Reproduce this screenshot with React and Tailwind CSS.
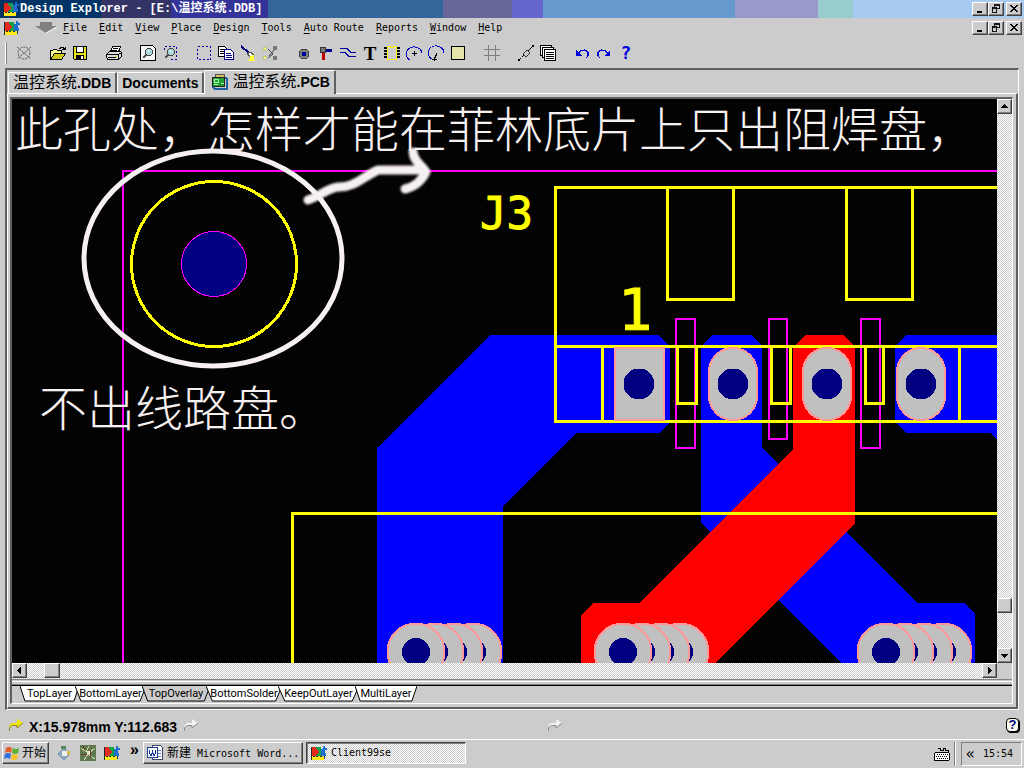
import React from "react";

const raised =
  "border border-t-white border-l-white border-r-[#404040] border-b-[#404040] bg-[#ccc] shadow-[inset_-1px_-1px_0_#808080]";
const dither =
  "bg-[conic-gradient(#fff_25%,#ccc_0_50%,#fff_0_75%,#ccc_0)] bg-[length:2px_2px]";

function Icon({ children, size = 16 }) {
  return (
    <svg
      width={size}
      height={size}
      viewBox="0 0 16 16"
      fill="none"
      stroke="#000"
      shapeRendering="crispEdges"
      className="shrink-0"
      aria-hidden="true"
    >
      {children}
    </svg>
  );
}

function LogoIcon() {
  return (
    <Icon>
      <path d="M0 2h10v13H0z" fill="#202830" stroke="none" />
      <path d="M10 4h4v10h-4z" fill="#123a70" stroke="none" />
      <path d="M1 2h4v9H1z" fill="#e8281c" stroke="none" />
      <path d="M5 2h5v9H5z" fill="#13a04a" stroke="none" />
      <path d="M5 4l4 3-4 3z" fill="#e8281c" stroke="none" />
      <path d="M10 4h2V1h2v2h2v2h-2v3h1v3h-5z" fill="#1c6fd0" stroke="none" />
      <path d="M1 11h1v1h2v-1h1v1h2v-1h2v1h2v-1h2v4H1z" fill="#ffe81c" stroke="none" />
    </Icon>
  );
}

const caption = [
  ["Minimize", <path key="m" d="M4 11h6" strokeWidth="2" />],
  ["Restore", <path key="r" d="M6 3.500h6M6.500 3v3M11.500 3v5M12 7.500H9M3 6.500h6M3 7.500h6M3.500 6v6M8.500 6v6M3 11.500h6M6 2.500h6" />],
  ["Close", <path key="c" d="M4 3l8 8M12 3l-8 8" strokeWidth="1.600" />],
];

function CaptionButtons({ of }) {
  return (
    <div className="ml-auto mr-0.5 flex">
      {caption.map(([name, art]) => (
        <button
          key={name}
          aria-label={`${name} ${of}`}
          className={`flex h-[14px] w-4 items-center justify-center last:ml-0.5 ${raised}`}
        >
          <Icon size={14}>{art}</Icon>
        </button>
      ))}
    </div>
  );
}

const menus = ["File", "Edit", "View", "Place", "Design", "Tools", "Auto Route", "Reports", "Window", "Help"];

const lens = (
  <>
    <circle cx="9" cy="7" r="3.500" fill="#a8d8d8" stroke="#444" />
    <path d="M6 10l-3 3" stroke="#555" strokeWidth="2" />
    <path d="M8 5h1v2H8z" fill="#fff" stroke="none" />
  </>
);

const toolGroups = [
  [
    ["Unroute", <g key="a" stroke="#555" shapeRendering="auto"><circle cx="8" cy="8" r="6" strokeDasharray="2 1" /><path d="M1 2l14 12M15 2L1 14" strokeDasharray="2 1" /></g>],
  ],
  [
    ["Open", <g key="a"><path d="M.5 14V5.500h2l1-1h3l1 1h4V8" fill="#fffb90" /><path d="M.5 14.500l4-6h11l-4 6z" fill="#d0c820" /><path d="M9 3.500h1l1-1h2l2 2M15.500 2v3M12 4.500h3" /></g>],
    ["Save", <g key="a"><path d="M1.500 1.500h13v13h-12l-1-1z" fill="#e8e020" /><path d="M4.500 1.500h7v6h-7z" fill="#fff" /><path d="M4 10h8v5H4z" fill="#000" stroke="none" /><path d="M9 11h2v3H9z" fill="#fff" stroke="none" /></g>],
  ],
  [
    ["Print", <g key="a"><path d="M4.500 7l2-5.500h8L12.500 7" fill="#fff" /><path d="M7 3.500h5M6 5.500h5" /><path d="M.5 9.500l3-3h11l1 1v4l-3 3H2l-1.500-2z" fill="#ddd" /><path d="M.5 9.500h12v5M12.500 9.500l3-2M2 12.500h8" /><path d="M9 11h2" stroke="#e8e020" /></g>],
  ],
  [
    ["Zoom window", <g key="a"><path d="M.5 .5h12l3 3v12H.5z" fill="#f4f4f4" />{lens}</g>],
    ["Zoom area", <g key="a"><path d="M2.500 5V1.500h12v13H9" stroke="#0000a0" strokeDasharray="2 2" />{lens}</g>],
  ],
  [
    ["Select", <path key="a" d="M1.500 1.500h13v13h-13z" stroke="#0000a0" strokeDasharray="2 2" />],
    ["Copy", <g key="a"><path d="M.5 1.500h6l2 2v8h-8z" fill="#fff" /><path d="M2 4.500h4M2 6.500h5M2 8.500h5" /><path d="M6.500 4.500h6l3 3v7h-9z" fill="#fff" stroke="#000080" /><path d="M8 8.500h5M8 10.500h6M8 12.500h6" stroke="#000080" /></g>],
    ["Clear", <g key="a"><path d="M1 1l8 7" stroke="#000080" strokeWidth="2" /><path d="M7 9l3-2 4 3-3 2z" fill="#fff" stroke="#555" /><path d="M10 11l4-1v3l1 3H7l3-2z" fill="#ffff30" stroke="none" /></g>],
    ["Cross probe", <g key="a"><path d="M6 4l5 5-5 4M12 5l-5 6" stroke="#444" shapeRendering="auto" /><path d="M1 2h3v3H1zM1 11h3v3H1z" fill="#ffff60" stroke="#999" strokeWidth=".5" /><path d="M11 1h4v4h-4zM11 11h4v4h-4z" fill="#777" stroke="none" /></g>],
  ],
  [
    ["Place pad", <g key="a"><circle cx="8" cy="9" r="5" fill="#808080" stroke="#444" /><circle cx="8" cy="9" r="2" fill="#0000d0" stroke="#000080" /></g>],
    ["Place via", <g key="a"><path d="M5 5h9" stroke="#000090" strokeWidth="3" /><path d="M5 6v9" stroke="#c00000" strokeWidth="3" /><circle cx="5" cy="5" r="3" fill="#777" stroke="#333" /></g>],
    ["Place track", <path key="a" d="M0 3.500h7l4 4h5M0 7.500h5l4 4h7" stroke="#0000a0" />],
    null,
    ["Place component", <g key="a"><path d="M1.500 2v12M14.500 2v12" strokeDasharray="2 1" strokeWidth="3" /><path d="M3.500 1.500h3v1h3v-1h3v13h-9z" fill="#ccc" stroke="#ffff00" /></g>],
    ["Arc by centre", <g key="a"><path d="M4 15A8 7 0 1 1 16 8" stroke="#0000c0" /><path d="M8.500 6v5M6 8.500h5" /></g>],
    ["Arc by edge", <g key="a"><path d="M4 14A8 7 0 1 1 16 8" stroke="#0000c0" /><path d="M9 8l-2 5M6.500 12v4M4 14.500h5" /></g>],
    ["Place fill", <g key="a"><path d="M1.500 1.500h13v13h-13z" fill="#e4e4a8" /></g>],
  ],
  [["Grid", <path key="a" d="M4.500 0v16M11.500 0v16M0 4.500h16M0 10.500h16" stroke="#808080" />]],
  [
    ["Measure", <g key="a"><path d="M1 15L15 1" strokeDasharray="3 1" /><path d="M5 9l4-4 3 3-4 4z" fill="#ccc" stroke="#333" /><path d="M0 14h2v2H0zM14 0h2v2h-2z" fill="#000" stroke="none" /></g>],
    ["Libraries", <g key="a"><path d="M.5 .5h11v10H.5z" fill="#fff" /><path d="M2.500 2.500h11v10h-11z" fill="#fff" /><path d="M4.500 4.500h11v11h-11z" fill="#fff" /><path d="M6 7.500h8M6 9.500h8M6 11.500h8M6 13.500h8" /></g>],
  ],
  [
    ["Undo", <g key="a" stroke="#0000d8"><path d="M4 9l2-3 5-1 3 2v4l-2 2" strokeWidth="1.300" /><path d="M2 5v6h6z" fill="#0000d8" stroke="none" /></g>],
    ["Redo", <g key="a" stroke="#0000d8"><path d="M12 9l-2-3-5-1-3 2v4l2 2" strokeWidth="1.300" /><path d="M14 5v6H8z" fill="#0000d8" stroke="none" /></g>],
    "?",
  ],
];

function Tool({ item }) {
  const base = "flex h-[22px] w-[22px] items-center justify-center leading-none";
  if (item === null)
    return (
      <button aria-label="Place text" className={`${base} font-['Liberation_Serif',serif] text-[19px] font-bold`}>
        T
      </button>
    );
  if (item === "?")
    return (
      <button aria-label="Help" className={`${base} font-['DejaVu_Sans_Mono',monospace] text-lg font-bold text-[#0000e0]`}>
        ?
      </button>
    );
  return (
    <button aria-label={item[0]} title={item[0]} className={base}>
      <Icon>{item[1]}</Icon>
    </button>
  );
}

function ScrollButton({ label, d }) {
  return (
    <button aria-label={label} className={`flex h-[15px] w-[15px] shrink-0 items-center justify-center ${raised}`}>
      <svg width="9" height="9" viewBox="0 0 9 9" shapeRendering="crispEdges" aria-hidden="true">
        <path d={d} />
      </svg>
    </button>
  );
}

const cutouts = [[676, 695, 448], [769, 787, 439], [861, 880, 448]];
const notches = [[677.5, 696.5], [771.5, 790.5], [865.5, 883.5]];

function Board() {
  return (
    <svg
      viewBox="12 99 985 564"
      preserveAspectRatio="xMinYMin slice"
      className="block h-full min-h-0 w-full min-w-0 flex-1 bg-[#030303]"
      shapeRendering="crispEdges"
      role="img"
      aria-label="Circuit board"
    >
      <g fill="#0000ff">
        <path d="M491 335H658L670 347V422L659 433H576L503 507V663H377V448Z" />
        <path d="M701 346L712 335H751L762 346V448L917 603H965L975 614V663H841L701 523Z" />
        <path d="M895 346L906 335H997V440L990 433H906L895 422Z" />
      </g>
      <path d="M793 347L805 335H843L855 347V523L716 663H581V615L593 603H639L793 449Z" fill="#ff0000" />
      <g fill="none" stroke="#ff00ff" strokeWidth="2">
        <path d="M123 663V171H997" />
        {cutouts.map(([l, r, b]) => (
          <path key={l} d={`M${l} 319H${r}V${b}H${l}Z`} />
        ))}
      </g>
      <g fill="none" stroke="#ffff00" strokeWidth="3">
        <path d="M997 187.500H555.500V421.500H997M555.500 346.500H997" />
        <path d="M667.500 187.500V299.500H733.500V187.500M846.500 187.500V299.500H912.500V187.500" />
        <path d="M602.500 346.500V421.500M959.500 346.500V421.500M292.500 663V513.500H997" />
        {notches.map(([l, r]) => (
          <path key={l} d={`M${l} 346.500V403.500H${r}V346.500`} />
        ))}
        <circle cx="214" cy="264" r="82.500" />
      </g>
      <circle cx="214" cy="264" r="32.500" fill="#000080" stroke="#ff00ff" />
      <g fill="#c0c0c0" stroke="#ff9999" strokeWidth="2">
        <rect x="615" y="348" width="49" height="72" />
        {[733, 827, 921].map((x) => (
          <rect key={x} x={x - 24} y="348" width="48" height="72" rx="24" />
        ))}
      </g>
      {[639, 733, 827, 921].map((x) => (
        <circle key={x} cx={x} cy="384" r="15.500" fill="#000080" />
      ))}
      {[416, 623, 886].map((x) =>
        [57, 38, 19, 0].map((dx) => (
          <g key={x + dx}>
            <circle cx={x + dx} cy="652" r="28.500" fill="#c0c0c0" stroke="#ff9999" strokeWidth="2" />
            <circle cx={x + dx - (dx ? 1 : 0)} cy="652" r="14" fill="#000080" />
          </g>
        ))
      )}
      <g
        fill="#ffff00"
        stroke="#ffff00"
        shapeRendering="auto"
        className="font-['DejaVu_Sans_Mono',monospace]"
      >
        <text x="480" y="229" fontSize="44">J3</text>
        <text x="618" y="330" fontSize="57">1</text>
      </g>
      <g shapeRendering="auto" fill="none" stroke="#f7f0f0">
        <ellipse cx="213" cy="258.500" rx="129" ry="107.500" strokeWidth="5" />
        <g strokeWidth="9" strokeLinecap="round" strokeLinejoin="round" className="blur-[1px]">
          <path d="M308 200C320 196 328 188 338 187C354 188 364 176 378 170H422" />
          <path d="M413 152C414 162 421 164 426 172C421 182 414 187 405 189" />
        </g>
      </g>
      <g fill="#f7f0f0" fontSize="48" className="font-['Noto_Sans_CJK_SC',sans-serif] font-light">
        <text x="15" y="147">此孔处，怎样才能在菲林底片上只出阻焊盘，</text>
        <text x="39" y="426">不出线路盘。</text>
      </g>
    </svg>
  );
}

const layers = [
  ["TopLayer", "w-[59px]"],
  ["BottomLayer", "w-[71px]"],
  ["TopOverlay", "w-[68px]"],
  ["BottomSolder", "w-[76px]"],
  ["KeepOutLayer", "w-[81px]"],
  ["MultiLayer", "w-[62px]"],
];

function LayerTab({ name, width, active }) {
  return (
    <button className={`relative -ml-1 h-4 text-[11px] leading-4 ${width}`}>
      <svg
        viewBox="0 0 60 16"
        preserveAspectRatio="none"
        className="absolute inset-0 h-full w-full"
        aria-hidden="true"
      >
        <path
          d="M0 0L5 15H55L60 0"
          fill={active ? "#ccc" : "#fff"}
          stroke="#000"
          vectorEffect="non-scaling-stroke"
        />
      </svg>
      <span className="relative">{name}</span>
    </button>
  );
}

function Arrow({ fill, edge }) {
  return (
    <svg width="16" height="14" viewBox="0 0 16 14" className="shrink-0" aria-hidden="true">
      <path d="M1 12V8l3-3h5V1l6 4-6 5V7H5L2 9z" fill={fill} />
      <path d="M1.500 13V9.500l3-2H9V10l6-5" stroke={edge} fill="none" />
    </svg>
  );
}

const mono = "font-['DejaVu_Sans_Mono','Noto_Sans_CJK_SC',monospace]";
const docTab =
  "flex items-center whitespace-nowrap rounded-t-[2px] border-l border-t border-l-white border-t-white border-r-2 border-r-[#606060] font-bold text-sm leading-none";

export default function App() {
  return (
    <div className="flex h-screen min-h-[400px] flex-col overflow-hidden bg-[#ccc] font-['Liberation_Sans','Noto_Sans_CJK_SC',sans-serif] text-black">
      <header className="flex h-[18px] shrink-0 items-center bg-[#a6caf0] bg-[linear-gradient(90deg,#003366_0_101px,#333366_0_171px,#333399_0_268px,#336699_0_443px,#666699_0_512px,#6666cc_0_543px,#6699cc_0_735px,#9999cc_0_818px,#99cccc_0_853px,#a6caf0_0)] pl-[3px]">
        <LogoIcon />
        <h1 className="ml-px whitespace-pre font-['Liberation_Mono','Noto_Sans_CJK_SC',monospace] text-xs font-bold leading-[18px] text-white">
          {"Design Explorer - [E:\\温控系统.DDB]"}
        </h1>
        <CaptionButtons of="application" />
      </header>

      <nav className={`flex h-5 shrink-0 items-center pl-1 text-[10px] ${mono}`}>
        <LogoIcon />
        <svg width="22" height="12" viewBox="0 0 22 12" className="ml-[15px]" aria-hidden="true">
          <path d="M5 0h12v4h5L11 11 0 4h5z" fill="#808080" />
          <path d="M22 5L11 11" stroke="#fff" />
        </svg>
        {menus.map((m) => (
          <button key={m} className="whitespace-pre px-1.5 leading-5">
            <span className="underline underline-offset-2">{m[0]}</span>
            {m.slice(1)}
          </button>
        ))}
        <CaptionButtons of="document" />
      </nav>

      <div className="flex h-[30px] shrink-0 items-center gap-3 pl-[5px]">
        <div className="-mr-1.5 h-[22px] w-0.5 border-l border-r border-l-white border-r-[#808080]" />
        {toolGroups.map((group, i) => (
          <div key={i} className="flex">
            {group.map((item, j) => (
              <Tool key={j} item={item} />
            ))}
          </div>
        ))}
      </div>

      <main className="mx-[5px] flex min-h-0 flex-1 flex-col border-b border-l-2 border-r border-t-2 border-b-white border-l-[#606060] border-r-white border-t-[#606060]">
        <div className="relative -mb-px flex h-6 shrink-0 items-end pl-px">
          <button className={`${docTab} mb-px h-[21px] px-1`}>
            <span className="text-base font-normal leading-none">温控系统</span>.DDB
          </button>
          <button className={`${docTab} mb-px h-[21px] px-1`}>Documents</button>
          <button className={`${docTab} h-6 bg-[#ccc] pb-0.5 pl-1.5 pr-1`}>
            <Icon size={17}>
              <path d="M4 1h9v6H4z" fill="#d8c060" stroke="#555" />
              <path d="M1 4h12v9H1z" fill="#20a030" stroke="#222" />
              <path d="M3 6h4v3H3zM9 10h3M3 11h4" stroke="#a8ffb0" />
              <path d="M13 4l2 2v9H4l-2-2" stroke="#2060a0" strokeWidth="2" />
            </Icon>
            <span className="ml-1 text-base font-normal leading-none">温控系统</span>.PCB
          </button>
        </div>

        <div className="flex min-h-0 flex-1 flex-col border-b-2 border-l border-r-2 border-t border-b-[#606060] border-l-white border-r-[#606060] border-t-white py-[3px] pl-0.5 pr-[3px]">
          <div className="flex min-h-0 flex-1 flex-col border-b border-l-2 border-r border-t-2 border-b-white border-l-[#606060] border-r-white border-t-[#606060]">
            <div className="flex min-h-0 flex-1">
              <Board />
              <div className={`flex w-[15px] shrink-0 flex-col ${dither}`}>
                <ScrollButton label="Scroll up" d="M4 2h1v1h1v1h1v1h1v1H1V5h1V4h1V3h1z" />
                <div className="grow-[485]" />
                <div className={`h-[15px] ${raised}`} />
                <div className="grow-[35]" />
                <ScrollButton label="Scroll down" d="M1 3h7v1H7v1H6v1H5v1H4V6H3V5H2V4H1z" />
              </div>
            </div>
            <div className="flex h-4 shrink-0 pr-[15px]">
              <div className={`flex flex-1 ${dither}`}>
                <ScrollButton label="Scroll left" d="M6 1v7H5V7H4V6H3V5H2V4h1V3h1V2h1V1z" />
                <div className="grow-[17]" />
                <div className={`h-[15px] w-4 ${raised}`} />
                <div className="grow-[922]" />
                <ScrollButton label="Scroll right" d="M3 1v7h1V7h1V6h1V5h1V4H6V3H5V2H4V1z" />
              </div>
            </div>
            <div className="h-[5px] shrink-0 border-t border-[#808080] pt-px">
              <div className="h-px bg-white" />
            </div>
            <div className="h-[19px] shrink-0 border-t border-[#808080]">
              <div className="flex border-t border-black pl-3 font-['Roboto',sans-serif]">
                {layers.map(([name, width]) => (
                  <LayerTab key={name} name={name} width={width} active={name === "TopOverlay"} />
                ))}
              </div>
            </div>
          </div>
        </div>
      </main>

      <section className="flex h-[29px] shrink-0 items-center pl-2 pr-[5px]">
        <div className="flex flex-1 items-center">
          <Arrow fill="#f0e800" edge="#8a8230" />
          <span className="ml-[5px] whitespace-nowrap pt-1 text-sm font-bold leading-5">
            X:15.978mm Y:112.683
          </span>
          <span className="ml-1.5">
            <Arrow fill="#f4f4f4" edge="#888" />
          </span>
        </div>
        <div className="flex flex-1 items-center pl-20">
          <Arrow fill="#f4f4f4" edge="#888" />
        </div>
        <button
          aria-label="Help advisor"
          className="flex h-[14px] w-[13px] items-center justify-center rounded-sm border border-black bg-[#fffff0] text-[13px] font-bold leading-none text-[#000080] shadow-[1px_1px_0_#000]"
        >
          ?
        </button>
      </section>

      <footer className="flex h-[29px] shrink-0 items-start border-t border-white pl-0.5 pt-0.5 text-xs">
        <button className={`flex h-[22px] w-[47px] items-center gap-0.5 pl-px ${raised}`}>
          <svg width="16" height="16" viewBox="0 0 16 16" className="shrink-0" aria-hidden="true">
            <path d="M2 3q3-2 6 0L7 8Q4 6 1 8z" fill="#e8582a" />
            <path d="M9 3q3 2 6 0l-1 5q-3 2-6 0z" fill="#58b030" />
            <path d="M1 9q3-2 6 0l-1 5q-3-2-6 0z" fill="#3070d8" />
            <path d="M8 9q3 2 6 0l-1 5q-3 2-6 0z" fill="#f8c020" />
          </svg>
          <span className="whitespace-nowrap">开始</span>
        </button>
        <div className="ml-[7px] flex h-[22px] items-center gap-2">
          <button aria-label="Desktop">
            <Icon>
              <path d="M8 3l6 6-6 6-6-6z" fill="#88a8c0" stroke="#7090a8" />
              <path d="M6 6h5v5H6z" fill="#f0f0e8" stroke="none" />
              <path d="M5 1h5v3H5z" fill="#508860" stroke="none" />
              <path d="M11 6h3v4h-3z" fill="#d8b850" stroke="none" />
            </Icon>
          </button>
          <button aria-label="Pictures">
            <Icon>
              <path d="M0 0h16v16H0z" fill="#607850" stroke="none" />
              <path d="M1 3l5 4 3-6M4 15l4-6 7 5M9 8l6-5" stroke="#c8d0a0" />
              <path d="M1 10l6-1M10 13l1-8M3 1l2 4" stroke="#703828" />
              <path d="M7 6h3v3H7z" fill="#e8e8d8" stroke="none" />
            </Icon>
          </button>
          <button aria-label="Design Explorer">
            <LogoIcon />
          </button>
        </div>
        <button aria-label="More" className="ml-2.5 text-base font-bold leading-4">
          »
        </button>
        <button className={`ml-1 flex h-[22px] w-40 items-center gap-1 overflow-hidden pl-[3px] ${raised}`}>
          <Icon>
            <path d="M5.500 .5h8l2 2v12h-10z" fill="#fff" stroke="#446" />
            <path d="M11 5.500h3M11 8.500h3M11 11.500h3" stroke="#6080c0" />
            <path d="M.5 2.500h10v10H.5z" fill="#fff" stroke="#2040a0" />
            <path d="M2.500 5v3l1 2h1l1-3 1 3h1l1-2V5" stroke="#1838a0" />
          </Icon>
          <span className={`whitespace-pre text-[10px] ${mono}`}>
            <span className="text-xs">新建</span> Microsoft Word...
          </span>
        </button>
        <button
          className={`ml-[3px] flex h-[22px] w-40 items-center gap-1 border border-b-white border-l-[#404040] border-r-white border-t-[#404040] pl-1 shadow-[inset_1px_1px_0_#808080] ${dither}`}
        >
          <LogoIcon />
          <span className={`text-[10px] ${mono}`}>Client99se</span>
        </button>
        <div className="ml-auto flex h-6 items-center">
          <svg width="16" height="14" viewBox="0 0 16 14" shapeRendering="crispEdges" aria-hidden="true">
            <path d="M4 1h2v2h3V1h2v2h3v2" fill="none" stroke="#000" />
            <path d="M1.500 5.500h13l1 1v6l-1 1H1l-.5-1v-6z" fill="#fff" stroke="#000" />
            <path d="M3 7.500h11M2 9.500h12M3 11.500h11" stroke="#000" strokeDasharray="1 1" />
          </svg>
          <div className="ml-1 h-full w-0.5 border-l border-r border-l-[#808080] border-r-white" />
          <div
            className={`ml-[5px] mr-0.5 flex h-full items-center gap-2 border border-b-white border-l-[#808080] border-r-white border-t-[#808080] pl-1 pr-2 text-[10px] ${mono}`}
          >
            <button aria-label="Show hidden icons" className="text-[15px] leading-none">
              «
            </button>
            <time>15:54</time>
          </div>
        </div>
      </footer>
    </div>
  );
}
